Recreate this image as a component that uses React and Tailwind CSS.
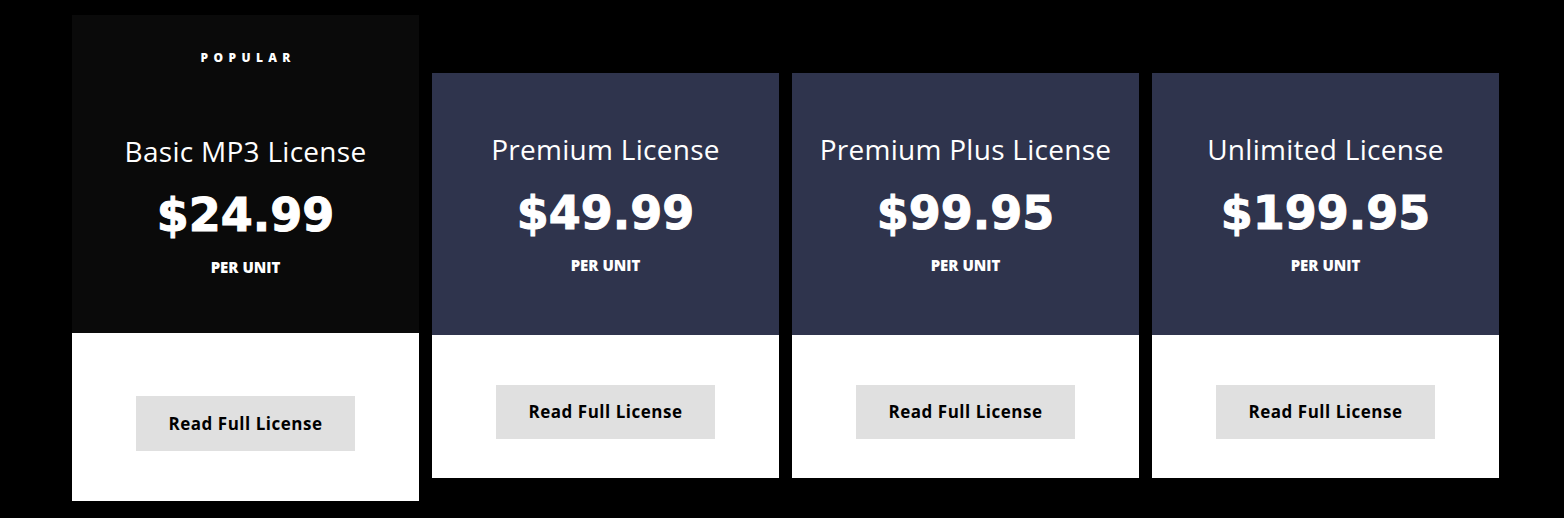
const plans = [
  { name: "Basic MP3 License", price: "$24.99", popular: true },
  { name: "Premium License", price: "$49.99" },
  { name: "Premium Plus License", price: "$99.95" },
  { name: "Unlimited License", price: "$199.95" },
];

const PlanCard = ({ plan }) => {
  const popular = plan.popular;

  return (
    <div className={`w-[347px] flex flex-col ${popular ? "" : "mt-[58px]"}`}>
      <div
        className={`flex flex-col items-center text-white ${
          popular ? "bg-[#0a0a0a] h-[318px] pt-[37px]" : "bg-[#2f344d] h-[262px] pt-[62px]"
        }`}
      >
        {popular && (
          <div className="text-[12px] leading-none font-extrabold tracking-[0.45em] pl-[0.45em] mb-[73px]">
            POPULAR
          </div>
        )}
        <h3 className="text-[28px] leading-none font-normal tracking-[0.01em]">{plan.name}</h3>
        <div className="font-['DejaVu_Sans',sans-serif] text-[46px] leading-none font-bold mt-[27px] [-webkit-text-stroke:1px_#fff]">
          {plan.price}
        </div>
        <div className="text-[15px] leading-none font-extrabold mt-[22px]">
          PER UNIT
        </div>
      </div>
      <div
        className={`bg-white flex justify-center ${
          popular ? "pt-[63px] pb-[50px]" : "pt-[50px] pb-[39px]"
        }`}
      >
        <button
          className={`w-[219px] bg-[#e0e0e0] text-black text-[17px] font-bold tracking-[0.03em] ${
            popular ? "h-[55px]" : "h-[54px]"
          }`}
        >
          Read Full License
        </button>
      </div>
    </div>
  );
};

export default function App() {
  return (
    <div
      className="w-[1564px] h-[518px] bg-black flex items-start gap-[13px] pl-[72px] pt-[15px]"
      style={{ fontFamily: '"Open Sans", "Liberation Sans", sans-serif' }}
    >
      {plans.map((plan) => (
        <PlanCard key={plan.name} plan={plan} />
      ))}
    </div>
  );
}
